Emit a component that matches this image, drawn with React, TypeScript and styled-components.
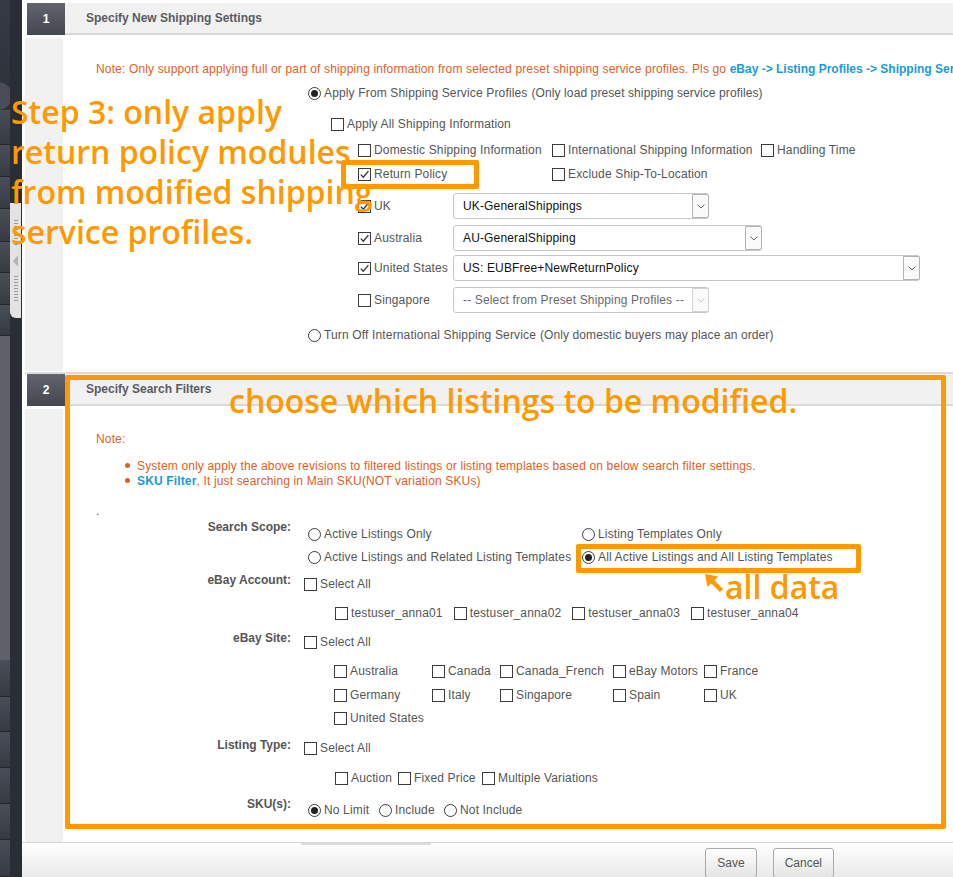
import React from "react";
import styled, { createGlobalStyle } from "styled-components";

const GlobalStyle = createGlobalStyle`
  html, body { margin: 0; padding: 0; }
  body {
    font-family: "Liberation Sans", Arial, sans-serif;
    font-size: 12px;
    color: #555;
    background: #fff;
  }
  * { box-sizing: border-box; }
`;

const ORANGE = "#ff9900";
const NOTE = "#e0601f";
const LINK = "#1a9bdb";

const Page = styled.div`
  position: relative;
  display: flex;
  width: 953px;
  height: 877px;
  overflow: hidden;
`;

/* ---------- sidebar ---------- */
const Sidebar = styled.div`
  display: flex;
  width: 22px;
  flex: none;
`;

const Rail = styled.div`
  position: relative;
  width: 10px;
  display: flex;
  flex-direction: column;
  overflow: hidden;
  background: #2f333c;
`;

const RailBlock = styled.div<{ $h: number; $tone: "dark" | "item" | "light" }>`
  height: ${(p) => p.$h}px;
  flex: none;
  background: ${(p) =>
    p.$tone === "dark"
      ? "linear-gradient(#363a44, #2c3039)"
      : p.$tone === "light"
      ? "#5e6169"
      : "linear-gradient(#4a4e58, #363a43)"};
  border-bottom: ${(p) => (p.$tone === "item" ? "1px solid #23262d" : "none")};
`;

const RailKnob = styled.div`
  position: absolute;
  left: -16px;
  top: 82px;
  width: 28px;
  height: 28px;
  border-radius: 50%;
  background: #4a4d57;
`;

const RailGap = styled.div`
  position: relative;
  width: 12px;
  background: #2a2d36;
`;

const Splitter = styled.div`
  position: absolute;
  left: 0;
  top: 203px;
  width: 11px;
  height: 115px;
  background: #e3e3e3;
  border-radius: 0 0 0 6px;
  display: flex;
  flex-direction: column;
  align-items: center;
  padding-top: 16px;
  gap: 8px;
`;

const Grip = styled.div`
  width: 4px;
  height: 28px;
  background-image: radial-gradient(circle, #9a9a9a 0.8px, transparent 1px);
  background-size: 2px 3px;
`;

/* ---------- main ---------- */
const Main = styled.div`
  flex: 1;
  min-width: 0;
  display: flex;
  flex-direction: column;
  padding: 3px 0 0 3px;
  background: #fff;
  overflow: hidden;
`;

const SectionHead = styled.div`
  display: flex;
  height: 32px;
  flex: none;
`;

const NumBox = styled.div`
  width: 38px;
  margin-left: 2px;
  background: linear-gradient(#62656e, #44474f);
  color: #fff;
  font-weight: bold;
  font-size: 12px;
  display: flex;
  align-items: center;
  justify-content: center;
`;

const TitleBar = styled.div`
  flex: 1;
  background: #f1f1f1;
  border-bottom: 2px solid #dadada;
  padding-left: 21px;
  display: flex;
  align-items: center;
  font-weight: bold;
  color: #5a5a64;
  white-space: nowrap;
`;

const SectionBody = styled.div<{ $h: number }>`
  display: flex;
  height: ${(p) => p.$h}px;
  margin-top: 3px;
  flex: none;
`;

const GrayCol = styled.div`
  width: 38px;
  flex: none;
  background: #f1f1f1;
`;

const Content = styled.div<{ $pt: number }>`
  flex: 1;
  min-width: 0;
  padding-top: ${(p) => p.$pt}px;
  display: flex;
  flex-direction: column;
`;

const Divider = styled.div`
  height: 2px;
  margin-top: 1px;
  background: #dcdcdc;
  flex: none;
`;

const Row = styled.div<{ $h: number; $pl: number; $mt?: number }>`
  height: ${(p) => p.$h}px;
  padding-left: ${(p) => p.$pl}px;
  margin-top: ${(p) => p.$mt ?? 0}px;
  display: flex;
  align-items: center;
  white-space: nowrap;
  flex: none;
`;

const GridRow = styled.div<{ $h: number; $pl: number; $cols: string }>`
  height: ${(p) => p.$h}px;
  padding-left: ${(p) => p.$pl}px;
  display: grid;
  grid-template-columns: ${(p) => p.$cols};
  align-items: center;
  white-space: nowrap;
  flex: none;
`;

const NoteText = styled.span`
  color: ${NOTE};
  letter-spacing: 0.15px;
`;

const Link = styled.span`
  color: ${LINK};
  font-weight: bold;
`;

const Hint = styled.span`
  color: #555;
  margin-left: 4px;
  letter-spacing: 0.1px;
`;

const Opt = styled.label`
  display: inline-flex;
  align-items: center;
  gap: 3px;
  color: #555;
  letter-spacing: 0.15px;
`;

const Box = styled.span`
  width: 13px;
  height: 13px;
  flex: none;
  border: 1px solid #3c3c3c;
  background: #fff;
  display: inline-flex;
  align-items: center;
  justify-content: center;
`;

const Circle = styled.span<{ $on?: boolean }>`
  width: 13px;
  height: 13px;
  flex: none;
  border-radius: 50%;
  border: 1px solid #3c3c3c;
  background: #fff;
  display: inline-flex;
  align-items: center;
  justify-content: center;
  &::after {
    content: "";
    width: 7px;
    height: 7px;
    border-radius: 50%;
    background: #222;
    display: ${(p) => (p.$on ? "block" : "none")};
  }
`;

const CountryCell = styled.div`
  width: 95px;
  flex: none;
  display: flex;
  align-items: center;
`;

const SelectBox = styled.div<{ $w: number; $disabled?: boolean }>`
  width: ${(p) => p.$w}px;
  height: 26px;
  flex: none;
  border: 1px solid #c6c6c6;
  border-radius: 3px;
  background: #fff;
  display: flex;
  align-items: center;
  padding-left: 9px;
  color: ${(p) => (p.$disabled ? "#6a6a6a" : "#111")};
`;

const SelText = styled.span`
  flex: 1;
  overflow: hidden;
  letter-spacing: 0.15px;
`;

const SelArrow = styled.span<{ $disabled?: boolean }>`
  width: 17px;
  height: 24px;
  margin-right: -1px;
  border: 1px solid ${(p) => (p.$disabled ? "#d2d2d2" : "#b2b2b2")};
  border-radius: 0 2px 2px 0;
  background: #fafafa;
  display: flex;
  align-items: center;
  justify-content: center;
`;

/* section 2 */
const BulletList = styled.ul`
  list-style: none;
  margin: 11px 0 0 0;
  padding: 0 0 0 62px;
  flex: none;
`;

const Bullet = styled.li`
  height: 15px;
  display: flex;
  align-items: center;
  white-space: nowrap;
  color: ${NOTE};
  letter-spacing: 0.15px;
  &::before {
    content: "";
    width: 5px;
    height: 5px;
    border-radius: 50%;
    background: ${NOTE};
    margin-right: 7px;
    flex: none;
  }
`;

const FormRow = styled.div`
  display: grid;
  grid-template-columns: 228px 1fr;
  column-gap: 13px;
  flex: none;
`;

const FormLabel = styled.div<{ $pt: number }>`
  text-align: right;
  font-weight: bold;
  color: #555;
  line-height: 16px;
  padding-top: ${(p) => p.$pt}px;
  white-space: nowrap;
`;

const Controls = styled.div<{ $pt?: number }>`
  display: flex;
  flex-direction: column;
  padding-top: ${(p) => p.$pt ?? 0}px;
`;

const Inline = styled.div<{ $gap: number }>`
  display: flex;
  align-items: center;
  gap: ${(p) => p.$gap}px;
`;

/* footer */
const Footer = styled.div`
  flex: 1;
  display: flex;
  align-items: flex-start;
  margin-left: -3px;
  border-top: 1px solid #d6d6d6;
  background: linear-gradient(#ffffff, #e8e8e8);
  padding-right: 119px;
`;

const FooterTab = styled.div`
  width: 130px;
  height: 2px;
  margin-left: 279px;
  background: #dcdcdc;
`;

const Spacer = styled.div`
  flex: 1;
`;

const Button = styled.button`
  height: 30px;
  margin-top: 5px;
  margin-left: 16px;
  padding: 0 11px;
  border: 1px solid #aaaaaa;
  border-radius: 3px;
  background: linear-gradient(#ffffff, #e4e4e4);
  color: #555;
  font-family: "Liberation Sans", Arial, sans-serif;
  font-size: 12px;
`;

/* annotations */
const Callout = styled.div<{ $x: number; $y: number; $lh: number }>`
  position: absolute;
  left: ${(p) => p.$x}px;
  top: ${(p) => p.$y}px;
  font-family: "Open Sans", Lato, sans-serif;
  font-weight: 600;
  font-size: 32px;
  line-height: ${(p) => p.$lh}px;
  color: ${ORANGE};
  white-space: nowrap;
  pointer-events: none;
`;

const Frame = styled.div<{ $x: number; $y: number; $w: number; $h: number; $b: number }>`
  position: absolute;
  left: ${(p) => p.$x}px;
  top: ${(p) => p.$y}px;
  width: ${(p) => p.$w}px;
  height: ${(p) => p.$h}px;
  border: ${(p) => p.$b}px solid ${ORANGE};
  border-radius: 2px;
  pointer-events: none;
`;

const ArrowMark = styled.svg`
  position: absolute;
  left: 704px;
  top: 573px;
`;

/* ---------- small components ---------- */
const Check = ({ on, children }: { on?: boolean; children?: React.ReactNode }) => (
  <Opt>
    <Box>
      {on && (
        <svg width="11" height="11" viewBox="0 0 11 11">
          <path d="M1.8 5.6 L4.3 8.2 L9.4 2.2" fill="none" stroke="#333" strokeWidth="1.3" />
        </svg>
      )}
    </Box>
    {children}
  </Opt>
);

const Radio = ({ on, children }: { on?: boolean; children?: React.ReactNode }) => (
  <Opt>
    <Circle $on={on} />
    {children}
  </Opt>
);

const Select = ({ w, text, disabled }: { w: number; text: string; disabled?: boolean }) => (
  <SelectBox $w={w} $disabled={disabled}>
    <SelText>{text}</SelText>
    <SelArrow $disabled={disabled}>
      <svg width="8" height="5" viewBox="0 0 8 5">
        <path d="M0.5 0.5 L4 4 L7.5 0.5" fill="none" stroke={disabled ? "#c4c4c4" : "#666"} strokeWidth="1" />
      </svg>
    </SelArrow>
  </SelectBox>
);

const railBlocks: { h: number; tone: "dark" | "item" | "light" }[] = [
  { h: 110, tone: "dark" },
  { h: 35, tone: "item" },
  { h: 32, tone: "item" },
  { h: 32, tone: "item" },
  { h: 33, tone: "item" },
  { h: 31, tone: "item" },
  { h: 32, tone: "item" },
  { h: 31, tone: "item" },
  { h: 324, tone: "light" },
  { h: 37, tone: "item" },
  { h: 35, tone: "item" },
  { h: 36, tone: "item" },
  { h: 36, tone: "item" },
  { h: 36, tone: "item" },
  { h: 37, tone: "item" },
];

const countries = [
  { name: "UK", on: true, h: 38, w: 256, text: "UK-GeneralShippings" },
  { name: "Australia", on: true, h: 26, w: 309, text: "AU-GeneralShipping" },
  { name: "United States", on: true, h: 34, w: 467, text: "US: EUBFree+NewReturnPolicy" },
  { name: "Singapore", on: false, h: 30, w: 256, text: "-- Select from Preset Shipping Profiles --", disabled: true },
];

const accounts = ["testuser_anna01", "testuser_anna02", "testuser_anna03", "testuser_anna04"];
const siteRows = [
  { h: 26, items: ["Australia", "Canada", "Canada_French", "eBay Motors", "France"] },
  { h: 22, items: ["Germany", "Italy", "Singapore", "Spain", "UK"] },
  { h: 24, items: ["United States"] },
];

export default function App() {
  return (
    <Page>
      <GlobalStyle />
      <Sidebar>
        <Rail>
          {railBlocks.map((b, i) => (
            <RailBlock key={i} $h={b.h} $tone={b.tone} />
          ))}
          <RailKnob />
        </Rail>
        <RailGap>
          <Splitter>
            <Grip />
            <svg width="7" height="12" viewBox="0 0 7 12">
              <path d="M6 0.5 L0.8 6 L6 11.5 Z" fill="#b3b3b3" />
            </svg>
            <Grip />
          </Splitter>
        </RailGap>
      </Sidebar>

      <Main>
        {/* Section 1 */}
        <SectionHead>
          <NumBox>1</NumBox>
          <TitleBar>Specify New Shipping Settings</TitleBar>
        </SectionHead>
        <SectionBody $h={333}>
          <GrayCol />
          <Content $pt={23}>
            <Row $h={16} $pl={33}>
              <NoteText>
                Note: Only support applying full or part of shipping information from selected preset shipping
                service profiles. Pls go&nbsp;
              </NoteText>
              <Link>eBay -&gt; Listing Profiles -&gt; Shipping Service Profiles</Link>
            </Row>
            <Row $h={32} $pl={245}>
              <Radio on>Apply From Shipping Service Profiles</Radio>
              <Hint>(Only load preset shipping service profiles)</Hint>
            </Row>
            <Row $h={30} $pl={268}>
              <Check>Apply All Shipping Information</Check>
            </Row>
            <GridRow $h={22} $pl={295} $cols="194px 209px auto">
              <Check>Domestic Shipping Information</Check>
              <Check>International Shipping Information</Check>
              <Check>Handling Time</Check>
            </GridRow>
            <GridRow $h={26} $pl={295} $cols="194px auto">
              <Check on>Return Policy</Check>
              <Check>Exclude Ship-To-Location</Check>
            </GridRow>
            {countries.map((c) => (
              <Row key={c.name} $h={c.h} $pl={295}>
                <CountryCell>
                  <Check on={c.on}>{c.name}</Check>
                </CountryCell>
                <Select w={c.w} text={c.text} disabled={c.disabled} />
              </Row>
            ))}
            <Row $h={40} $pl={245}>
              <Radio>Turn Off International Shipping Service</Radio>
              <Hint>(Only domestic buyers may place an order)</Hint>
            </Row>
          </Content>
        </SectionBody>

        <Divider />

        {/* Section 2 */}
        <SectionHead>
          <NumBox>2</NumBox>
          <TitleBar>Specify Search Filters</TitleBar>
        </SectionHead>
        <SectionBody $h={433}>
          <GrayCol />
          <Content $pt={22}>
            <Row $h={16} $pl={33}>
              <NoteText>Note:</NoteText>
            </Row>
            <BulletList>
              <Bullet>
                System only apply the above revisions to filtered listings or listing templates based on below
                search filter settings.
              </Bullet>
              <Bullet>
                <Link>SKU Filter</Link>, It just searching in Main SKU(NOT variation SKUs)
              </Bullet>
            </BulletList>
            <Row $h={16} $pl={33} $mt={15}>
              .
            </Row>

            <FormRow>
              <FormLabel $pt={0}>Search Scope:</FormLabel>
              <Controls $pt={3}>
                <GridRow $h={24} $pl={4} $cols="274px auto">
                  <Radio>Active Listings Only</Radio>
                  <Radio>Listing Templates Only</Radio>
                </GridRow>
                <GridRow $h={22} $pl={4} $cols="274px auto">
                  <Radio>Active Listings and Related Listing Templates</Radio>
                  <Radio on>All Active Listings and All Listing Templates</Radio>
                </GridRow>
              </Controls>
            </FormRow>

            <FormRow>
              <FormLabel $pt={4}>eBay Account:</FormLabel>
              <Controls>
                <Row $h={32} $pl={0}>
                  <Check>Select All</Check>
                </Row>
                <Row $h={26} $pl={31}>
                  <Inline $gap={11}>
                    {accounts.map((a) => (
                      <Check key={a}>{a}</Check>
                    ))}
                  </Inline>
                </Row>
              </Controls>
            </FormRow>

            <FormRow>
              <FormLabel $pt={4}>eBay Site:</FormLabel>
              <Controls>
                <Row $h={32} $pl={0}>
                  <Check>Select All</Check>
                </Row>
                {siteRows.map((r, i) => (
                  <GridRow key={i} $h={r.h} $pl={30} $cols="98px 68px 113px 91px auto">
                    {r.items.map((s) => (
                      <Check key={s}>{s}</Check>
                    ))}
                  </GridRow>
                ))}
              </Controls>
            </FormRow>

            <FormRow>
              <FormLabel $pt={7}>Listing Type:</FormLabel>
              <Controls>
                <Row $h={36} $pl={0}>
                  <Check>Select All</Check>
                </Row>
                <GridRow $h={24} $pl={31} $cols="63px 84px auto">
                  <Check>Auction</Check>
                  <Check>Fixed Price</Check>
                  <Check>Multiple Variations</Check>
                </GridRow>
              </Controls>
            </FormRow>

            <FormRow>
              <FormLabel $pt={6}>SKU(s):</FormLabel>
              <Controls>
                <GridRow $h={40} $pl={4} $cols="71px 65px auto">
                  <Radio on>No Limit</Radio>
                  <Radio>Include</Radio>
                  <Radio>Not Include</Radio>
                </GridRow>
              </Controls>
            </FormRow>
          </Content>
        </SectionBody>

        <Footer>
          <FooterTab />
          <Spacer />
          <Button>Save</Button>
          <Button>Cancel</Button>
        </Footer>
      </Main>

      {/* annotations */}
      <Callout $x={11} $y={92} $lh={40}>
        Step 3: only apply
        <br />
        return policy modules
        <br />
        from modified shipping
        <br />
        service profiles.
      </Callout>
      <Frame $x={341} $y={160} $w={138} $h={29} $b={5} />
      <Frame $x={65} $y={375} $w={881} $h={454} $b={5} />
      <Callout $x={229} $y={381} $lh={40}>
        choose which listings to be modified.
      </Callout>
      <Frame $x={576} $y={544} $w={285} $h={29} $b={5} />
      <ArrowMark width="20" height="20" viewBox="0 0 20 20">
        <path d="M1 1 L14 3.5 L3.5 14 Z" fill={ORANGE} />
        <path d="M6.5 6.5 L17.5 17.5" stroke={ORANGE} strokeWidth="4.4" strokeLinecap="butt" />
      </ArrowMark>
      <Callout $x={725} $y={571} $lh={32}>
        all data
      </Callout>
    </Page>
  );
}
